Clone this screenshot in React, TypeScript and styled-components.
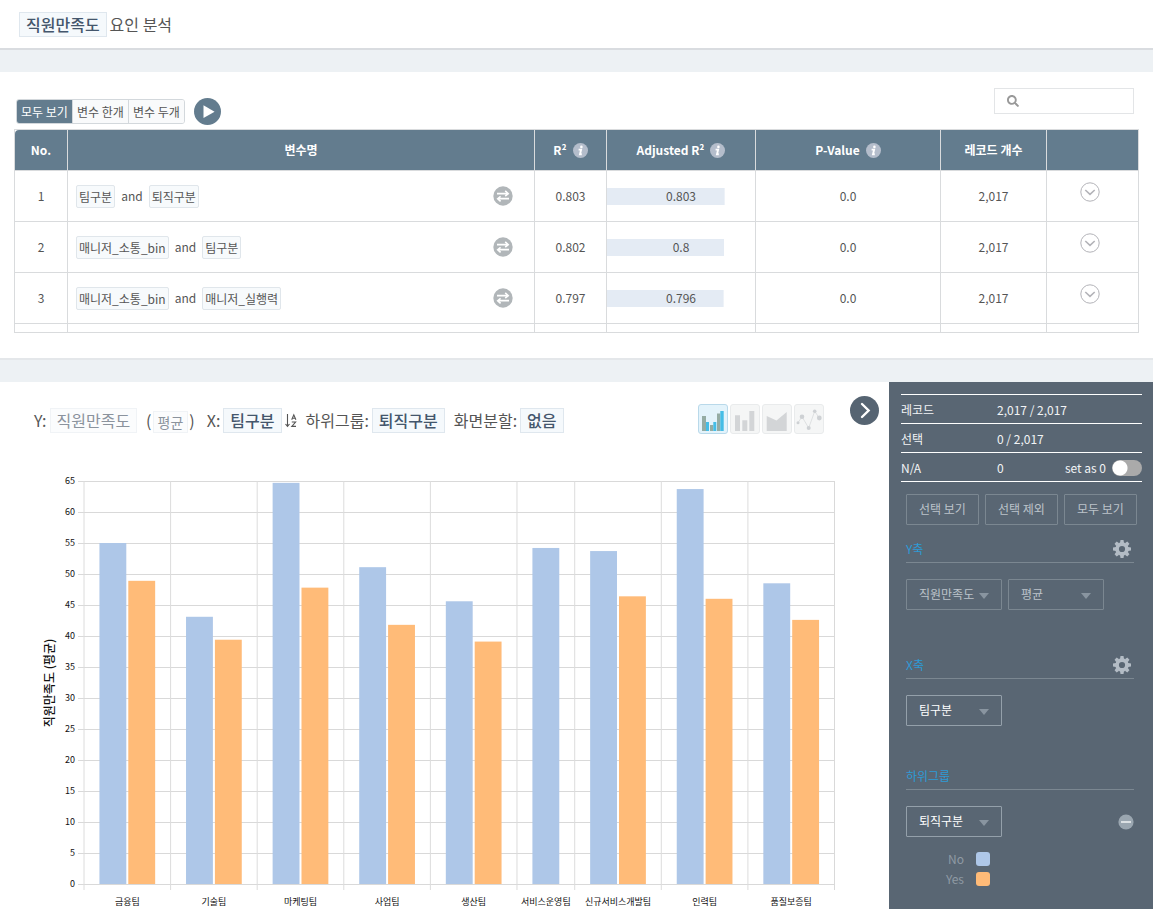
import React from 'react';
import styled, { createGlobalStyle } from 'styled-components';
import { FaSearch } from 'react-icons/fa';

const GlobalStyle = createGlobalStyle`
  * { box-sizing: border-box; }
  body {
    margin: 0;
    background: #fff;
    color: #555;
    font-family: 'Noto Sans CJK KR', 'Noto Sans', sans-serif;
    font-size: 12px;
    line-height: 18px;
  }
  button, input, select { font: inherit; color: inherit; }
  svg { display: block; }
`;

const Page = styled.div`
  display: flex;
  flex-direction: column;
  min-height: 100vh;
`;

const TopBar = styled.header`
  display: flex;
  align-items: center;
  height: 48px;
  padding: 0 19px;
`;

const Band = styled.div<{ $strong?: boolean }>`
  height: 24px;
  background: #edf1f4;
  border-top: 2px solid ${(p) => (p.$strong ? '#d9dce0' : '#e4e7ea')};
`;

const Title = styled.h1`
  display: flex;
  align-items: center;
  gap: 3px;
  margin: 0;
  font-size: 16px;
  line-height: 24px;
  font-weight: 400;
`;

const BigChip = styled.span<{ $muted?: boolean }>`
  padding: 0 6px;
  border: 1px solid ${(p) => (p.$muted ? '#f0f3f6' : '#dfe7ee')};
  background: ${(p) => (p.$muted ? '#fbfcfd' : '#f5f9fc')};
  color: ${(p) => (p.$muted ? '#8b939d' : '#44566c')};
  font-size: 16px;
  line-height: 23px;
  font-weight: ${(p) => (p.$muted ? 400 : 500)};
`;

const SmallChip = styled(BigChip)`
  margin-top: 2px;
  padding: 0 4px;
  font-size: 14px;
  line-height: 20px;
`;

const FactorPanel = styled.section`
  height: 286px;
  padding: 16px 14px 0;
`;

const Toolbar = styled.div`
  display: flex;
  align-items: flex-start;
  justify-content: space-between;
  height: 41px;
  padding: 0 5px 0 2px;
`;

const ViewControls = styled.div`
  display: flex;
  align-items: center;
  gap: 9px;
  padding-top: 10px;
`;

const Segments = styled.div`
  display: flex;
  border: 1px solid #d3d8dc;
  border-radius: 3px;
  overflow: hidden;
`;

const Segment = styled.button<{ $active?: boolean }>`
  width: 56px;
  height: 23px;
  padding: 0;
  border: 0;
  border-left: 1px solid #d3d8dc;
  background: ${(p) => (p.$active ? '#637c8e' : '#f9fafb')};
  color: ${(p) => (p.$active ? '#fff' : '#555')};
  white-space: nowrap;
  &:first-child { border-left: 0; width: 55px; }
`;

const IconButton = styled.button`
  display: inline-flex;
  padding: 0;
  border: 0;
  background: none;
`;

const SearchBox = styled.label`
  display: flex;
  align-items: center;
  width: 140px;
  height: 26px;
  padding-left: 12px;
  gap: 8px;
  border: 1px solid #e3e5e7;
  color: #999;
`;

const SearchInput = styled.input`
  flex: 1;
  min-width: 0;
  border: 0;
  padding: 0;
  outline: 0;
  background: none;
`;

const TableFrame = styled.div`
  height: 204px;
  overflow: hidden;
  border: 1px solid #d9dbdd;
  border-right: 0;
`;

const Table = styled.table`
  width: 100%;
  table-layout: fixed;
  border-collapse: separate;
  border-spacing: 0;
`;

const Col = styled.col<{ $w?: number }>`
  width: ${(p) => (p.$w ? `${p.$w}px` : 'auto')};
`;

const HeadCell = styled.th`
  height: 41px;
  padding: 0;
  background: #637c8e;
  color: #fff;
  font-weight: 700;
  border-right: 1px solid #d9dbdd;
  border-bottom: 1px solid #d9dbdd;
  &:first-child { border-top-left-radius: 4px; }
`;

const HeadLabel = styled.div`
  display: flex;
  align-items: center;
  justify-content: center;
  gap: 6px;
`;

const Cell = styled.td`
  height: 51px;
  padding: 0;
  text-align: center;
  border-right: 1px solid #d9dbdd;
  border-bottom: 1px solid #d9dbdd;
`;

const Variables = styled.div`
  display: flex;
  align-items: center;
  gap: 6px;
  padding: 0 21px 0 8px;
`;

const Chip = styled.span`
  padding: 0 2px;
  border: 1px solid #e0e6eb;
  border-radius: 2px;
  background: #f7fafc;
  line-height: 21px;
`;

const SwapButton = styled(IconButton)`
  margin-left: auto;
`;

const ScoreBar = styled.div<{ $score: number }>`
  padding-bottom: 2px;
  line-height: 15px;
  background: linear-gradient(#e4ebf4, #e4ebf4) no-repeat;
  background-size: ${(p) => p.$score * 99}% 100%;
`;

const Expand = styled.div`
  display: flex;
  justify-content: center;
  padding: 0 5px 8px 0;
`;

const Workspace = styled.div`
  display: flex;
  flex: 1;
`;

const ChartArea = styled.main`
  flex: 1;
  min-width: 0;
`;

const ChartHeader = styled.div`
  display: flex;
  align-items: flex-start;
  height: 78px;
  padding: 14px 10px 0 34px;
`;

const Encodings = styled.div`
  display: flex;
  align-items: center;
  padding-top: 12px;
  font-size: 16px;
  line-height: 25px;
  white-space: nowrap;
`;

const Encoding = styled.div`
  display: flex;
  align-items: center;
  gap: 3px;
  margin-right: 9px;
`;

const Aggregate = styled(Encoding)`
  gap: 1px;
  margin-right: 12px;
`;

const ChartTypes = styled.div`
  display: flex;
  gap: 2px;
  margin: 8px 26px 0 auto;
`;

const ChartType = styled.button<{ $active?: boolean }>`
  display: flex;
  align-items: center;
  justify-content: center;
  width: 30px;
  height: 30px;
  padding: 0;
  border: 1px solid ${(p) => (p.$active ? '#b9d9ea' : '#e9ebec')};
  border-radius: 3px;
  background: ${(p) => (p.$active ? '#e3f3fb' : '#f5f6f6')};
`;

const ChartSvg = styled.svg`
  width: 100%;
  height: auto;
  font-size: 9px;
  fill: #111;
`;

const AxisTitle = styled.text`
  font-size: 12px;
  font-weight: 500;
`;

const Sidebar = styled.aside`
  width: 264px;
  padding: 12px 11px 20px 12px;
  background: #596673;
  color: #f2f4f6;
`;

const Stats = styled.table`
  width: 100%;
  border-collapse: collapse;
  border-top: 1px solid #fff;
`;

const StatRow = styled.tr`
  border-bottom: 1px solid #fff;
`;

const StatLabel = styled.th`
  width: 96px;
  height: 29px;
  padding: 2px 0 0;
  text-align: left;
  font-weight: 400;
`;

const StatValue = styled.td`
  height: 29px;
  padding: 2px 0 0;
`;

const StatValueLine = styled.div`
  display: flex;
  align-items: center;
  justify-content: space-between;
`;

const SwitchLabel = styled.label`
  display: flex;
  align-items: center;
  gap: 6px;
`;

const Switch = styled.input`
  appearance: none;
  width: 30px;
  height: 16px;
  margin: 0;
  border-radius: 8px;
  background: radial-gradient(circle at 8px 8px, #fff 7px, transparent 8px) #aaa;
`;

const FilterButtons = styled.div`
  display: flex;
  gap: 6px;
  padding: 12px 5px 11px;
`;

const FilterButton = styled.button`
  flex: 1;
  height: 31px;
  padding: 0 0 2px;
  border: 1px solid #7b8791;
  border-radius: 1px;
  background: none;
  color: #bcc3ca;
  white-space: nowrap;
`;

const Group = styled.section<{ $h: number }>`
  height: ${(p) => p.$h}px;
  padding: 0 8px 0 5px;
`;

const GroupTitle = styled.h2`
  display: flex;
  align-items: center;
  justify-content: space-between;
  height: 27px;
  margin: 0 0 16px;
  padding-right: 3px;
  border-bottom: 1px solid #7b8791;
  color: #2d9bd6;
  font-size: 12px;
  font-weight: 400;
`;

const Fields = styled.div`
  display: flex;
  align-items: center;
  gap: 6px;
`;

const SelectWrap = styled.div<{ $muted?: boolean }>`
  position: relative;
  width: 96px;
  color: ${(p) => (p.$muted ? '#bcc3ca' : '#fff')};
`;

const Select = styled.select<{ $muted?: boolean }>`
  appearance: none;
  width: 100%;
  height: 31px;
  padding: 0 12px 1px;
  border: 1px solid ${(p) => (p.$muted ? '#7b8791' : '#94a0aa')};
  border-radius: 1px;
  background: none;
`;

const Caret = styled.svg`
  position: absolute;
  right: 13px;
  top: 14px;
  pointer-events: none;
`;

const RemoveButton = styled(IconButton)`
  margin-left: auto;
`;

const Legend = styled.ul`
  display: grid;
  gap: 2px;
  margin: 13px 0 0;
  padding: 0;
  list-style: none;
  color: #8f9aa4;
`;

const LegendItem = styled.li`
  display: flex;
  align-items: center;
  gap: 12px;
  width: 84px;
  justify-content: flex-end;
`;

const Swatch = styled.span<{ $color: string }>`
  width: 14px;
  height: 14px;
  border-radius: 3px;
  background: ${(p) => p.$color};
`;

const BLUE = '#aec7e8';
const ORANGE = '#ffbb78';

const rows = [
  { no: 1, vars: ['팀구분', '퇴직구분'], r2: '0.803', adj: '0.803', p: '0.0', n: '2,017' },
  { no: 2, vars: ['매니저_소통_bin', '팀구분'], r2: '0.802', adj: '0.8', p: '0.0', n: '2,017' },
  { no: 3, vars: ['매니저_소통_bin', '매니저_실행력'], r2: '0.797', adj: '0.796', p: '0.0', n: '2,017' },
];

const teams: { name: string; no: number; yes?: number }[] = [
  { name: '금융팀', no: 55, yes: 48.9 },
  { name: '기술팀', no: 43.1, yes: 39.4 },
  { name: '마케팅팀', no: 64.7, yes: 47.8 },
  { name: '사업팀', no: 51.1, yes: 41.8 },
  { name: '생산팀', no: 45.6, yes: 39.1 },
  { name: '서비스운영팀', no: 54.2 },
  { name: '신규서비스개발팀', no: 53.7, yes: 46.4 },
  { name: '인력팀', no: 63.7, yes: 46 },
  { name: '품질보증팀', no: 48.5, yes: 42.6 },
];

const InfoIcon = () => (
  <svg width="15" height="15" viewBox="0 0 15 15" aria-hidden="true">
    <circle cx="7.5" cy="7.5" r="7.5" fill="#b4bdcb" />
    <circle cx="8.4" cy="3.9" r="1.3" fill="#fff" />
    <path d="M5.6 6.6h2.5l-1.1 4.6h1.8" fill="none" stroke="#fff" strokeWidth="1.9" />
  </svg>
);

const PlayIcon = () => (
  <svg width="27" height="27" viewBox="0 0 27 27" aria-hidden="true">
    <circle cx="13.5" cy="13.5" r="13.5" fill="#637c8e" />
    <path d="M9.5 7.3L20.6 13.7L9.5 20Z" fill="#fff" />
  </svg>
);

const SwapIcon = () => (
  <svg width="20" height="20" viewBox="0 0 20 20" aria-hidden="true">
    <circle cx="10" cy="10" r="9.7" fill="#b1b6b9" />
    <path d="M4 7.7H14M16 12.6H6" stroke="#fff" strokeWidth="1.8" />
    <path d="M12.2 4.8L15.2 7.7L12.2 10M7.6 10.3L4.7 12.7L7.6 15.4" fill="none" stroke="#fff" strokeWidth="1.6" />
  </svg>
);

const ExpandIcon = () => (
  <svg width="20" height="20" viewBox="0 0 20 20" fill="none" stroke="#b3b3b8" aria-hidden="true">
    <circle cx="10" cy="10" r="9.2" />
    <path d="M5.3 8L10 12.4L14.7 8" strokeWidth="1.6" />
  </svg>
);

const SortIcon = () => (
  <svg width="12" height="15" viewBox="0 0 12 15" fill="none" stroke="#555" strokeWidth="1.1" aria-hidden="true">
    <path d="M2.5 1V13M0.5 11L2.5 13.4L4.5 11" />
    <path d="M6.7 6.8L8.8 1.8L10.9 6.8M7.4 5.2H10.2" />
    <path d="M6.8 9H10.6L6.8 13.4H11" />
  </svg>
);

const NextIcon = () => (
  <svg width="29" height="29" viewBox="0 0 29 29" fill="none" aria-hidden="true">
    <circle cx="14.5" cy="14.5" r="14.5" fill="#566472" />
    <path d="M12 8L18.6 14.5L12 21" stroke="#fff" strokeWidth="2.4" strokeLinecap="round" />
  </svg>
);

const GroupedBarsIcon = () => (
  <svg width="24" height="24" viewBox="0 0 24 24" aria-hidden="true">
    <path d="M1 9h4v15H1zM9 18h3.300v6H9zM16 6.500h3.300V24H16z" fill="#95aca4" />
    <path d="M5 15h3v9H5zM12.300 15h3v9h-3zM19.300 4h3.400v20h-3.400z" fill="#45bde6" />
  </svg>
);

const BarsIcon = () => (
  <svg width="24" height="24" viewBox="0 0 24 24" fill="#d3d5d7" aria-hidden="true">
    <path d="M2 8.300h5V24H2zM9.300 13.300h5V24h-5zM16.300 4h5v20h-5z" />
  </svg>
);

const AreaIcon = () => (
  <svg width="24" height="24" viewBox="0 0 24 24" fill="#d3d5d7" aria-hidden="true">
    <path d="M1.700 9L11.500 13.500L21.700 5V24H1.700Z" />
  </svg>
);

const LineIcon = () => (
  <svg width="28" height="28" viewBox="0 0 28 28" fill="#ced1d4" aria-hidden="true">
    <path d="M3 17.700L7 11.700L13.700 23L19.700 6.300L24.300 13" fill="none" stroke="#d8dadc" strokeWidth="0.8" />
    <circle cx="3" cy="17.700" r="1.500" />
    <circle cx="7" cy="11.700" r="2.300" />
    <circle cx="13.700" cy="23" r="2" />
    <circle cx="19.700" cy="6.300" r="1.800" />
    <circle cx="24.300" cy="13" r="2.400" />
  </svg>
);

const GearIcon = () => (
  <svg width="18" height="18" viewBox="0 0 18 18" aria-hidden="true">
    <circle cx="9" cy="9" r="4.900" fill="none" stroke="#b3bcc5" strokeWidth="3.600" />
    {[0, 45, 90, 135, 180, 225, 270, 315].map((a) => (
      <path key={a} d="M7 3L7.500 0H10.500L11 3Z" fill="#b3bcc5" transform={`rotate(${a} 9 9)`} />
    ))}
  </svg>
);

const RemoveIcon = () => (
  <svg width="16" height="16" viewBox="0 0 16 16" aria-hidden="true">
    <circle cx="8" cy="8" r="7.6" fill="#9aa6b0" />
    <path d="M3 8h10" stroke="#fff" strokeWidth="1.3" />
  </svg>
);

function BarChart() {
  const left = 84;
  const right = 834.5;
  const base = 424;
  const unit = 6.2;
  const slot = (right - left) / 26;
  const ticks = Array.from({ length: 14 }, (_, i) => i * 5);
  let x = left;
  const bands = teams.map((t) => {
    const width = (t.yes === undefined ? 2 : 3) * slot;
    const band = { ...t, x, width };
    x += width;
    return band;
  });
  return (
    <ChartSvg viewBox="0 0 889 448" role="img" aria-label="팀구분별 직원만족도 평균">
      {ticks.map((v) => (
        <g key={v}>
          <path d={`M${left - 6} ${base - v * unit + 0.5}H${right}`} stroke="#d9d9d9" />
          <text x="75" y={base - v * unit + 3} textAnchor="end">{v}</text>
        </g>
      ))}
      {bands.map((b) => (
        <g key={b.name}>
          <path d={`M${b.x} ${base - 65 * unit}V${base + 6}`} stroke="#dcdcdc" />
          <rect x={b.x + slot / 2 + 1} y={base - b.no * unit} width={slot - 2} height={b.no * unit} fill={BLUE} />
          {b.yes !== undefined && (
            <rect x={b.x + slot * 1.5 + 1} y={base - b.yes * unit} width={slot - 2} height={b.yes * unit} fill={ORANGE} />
          )}
          <text x={b.x + b.width / 2} y={base + 21} textAnchor="middle">{b.name}</text>
        </g>
      ))}
      <path d={`M${right} ${base - 65 * unit}V${base + 6}`} stroke="#d9d9d9" />
      <AxisTitle transform="translate(54 223) rotate(-90)" textAnchor="middle">직원만족도 (평균)</AxisTitle>
    </ChartSvg>
  );
}

function Dropdown({ label, value, muted }: { label: string; value: string; muted?: boolean }) {
  return (
    <SelectWrap $muted={muted}>
      <Select $muted={muted} aria-label={label} defaultValue={value}>
        <option>{value}</option>
      </Select>
      <Caret width="10" height="6" viewBox="0 0 10 6" fill="#8995a0" aria-hidden="true">
        <path d="M0 0H10L5 6Z" />
      </Caret>
    </SelectWrap>
  );
}

export default function App() {
  return (
    <Page>
      <GlobalStyle />
      <TopBar>
        <Title><BigChip>직원만족도</BigChip> 요인 분석</Title>
      </TopBar>
      <Band $strong />
      <FactorPanel>
        <Toolbar>
          <ViewControls>
            <Segments>
              <Segment $active>모두 보기</Segment>
              <Segment>변수 한개</Segment>
              <Segment>변수 두개</Segment>
            </Segments>
            <IconButton aria-label="실행"><PlayIcon /></IconButton>
          </ViewControls>
          <SearchBox>
            <FaSearch size={12} />
            <SearchInput type="search" aria-label="검색" />
          </SearchBox>
        </Toolbar>
        <TableFrame>
          <Table>
            <colgroup>
              <Col $w={53} /><Col /><Col $w={72} /><Col $w={149} /><Col $w={185} /><Col $w={106} /><Col $w={92} />
            </colgroup>
            <thead>
              <tr>
                <HeadCell>No.</HeadCell>
                <HeadCell>변수명</HeadCell>
                <HeadCell><HeadLabel>R²<InfoIcon /></HeadLabel></HeadCell>
                <HeadCell><HeadLabel>Adjusted R²<InfoIcon /></HeadLabel></HeadCell>
                <HeadCell><HeadLabel>P-Value<InfoIcon /></HeadLabel></HeadCell>
                <HeadCell>레코드 개수</HeadCell>
                <HeadCell />
              </tr>
            </thead>
            <tbody>
              {rows.map((r) => (
                <tr key={r.no}>
                  <Cell>{r.no}</Cell>
                  <Cell>
                    <Variables>
                      <Chip>{r.vars[0]}</Chip>
                      and
                      <Chip>{r.vars[1]}</Chip>
                      <SwapButton aria-label="변수 교체"><SwapIcon /></SwapButton>
                    </Variables>
                  </Cell>
                  <Cell>{r.r2}</Cell>
                  <Cell><ScoreBar $score={Number(r.adj)}>{r.adj}</ScoreBar></Cell>
                  <Cell>{r.p}</Cell>
                  <Cell>{r.n}</Cell>
                  <Cell><Expand><IconButton aria-label="펼치기"><ExpandIcon /></IconButton></Expand></Cell>
                </tr>
              ))}
              <tr>
                <Cell /><Cell /><Cell /><Cell /><Cell /><Cell /><Cell />
              </tr>
            </tbody>
          </Table>
        </TableFrame>
      </FactorPanel>
      <Band />
      <Workspace>
        <ChartArea>
          <ChartHeader>
            <Encodings>
              <Encoding>Y: <BigChip $muted>직원만족도</BigChip></Encoding>
              <Aggregate>( <SmallChip $muted>평균</SmallChip> )</Aggregate>
              <Encoding>X: <BigChip>팀구분</BigChip><SortIcon /></Encoding>
              <Encoding>하위그룹: <BigChip>퇴직구분</BigChip></Encoding>
              <Encoding>화면분할: <BigChip>없음</BigChip></Encoding>
            </Encodings>
            <ChartTypes>
              <ChartType $active aria-label="그룹 막대"><GroupedBarsIcon /></ChartType>
              <ChartType aria-label="막대"><BarsIcon /></ChartType>
              <ChartType aria-label="영역"><AreaIcon /></ChartType>
              <ChartType aria-label="선"><LineIcon /></ChartType>
            </ChartTypes>
            <IconButton aria-label="패널 접기"><NextIcon /></IconButton>
          </ChartHeader>
          <BarChart />
        </ChartArea>
        <Sidebar>
          <Stats>
            <tbody>
              <StatRow><StatLabel>레코드</StatLabel><StatValue>2,017 / 2,017</StatValue></StatRow>
              <StatRow><StatLabel>선택</StatLabel><StatValue>0 / 2,017</StatValue></StatRow>
              <StatRow>
                <StatLabel>N/A</StatLabel>
                <StatValue>
                  <StatValueLine>
                    0
                    <SwitchLabel>set as 0 <Switch type="checkbox" role="switch" /></SwitchLabel>
                  </StatValueLine>
                </StatValue>
              </StatRow>
            </tbody>
          </Stats>
          <FilterButtons>
            <FilterButton>선택 보기</FilterButton>
            <FilterButton>선택 제외</FilterButton>
            <FilterButton>모두 보기</FilterButton>
          </FilterButtons>
          <Group $h={116}>
            <GroupTitle>Y축 <IconButton aria-label="Y축 설정"><GearIcon /></IconButton></GroupTitle>
            <Fields>
              <Dropdown label="Y축 변수" value="직원만족도" muted />
              <Dropdown label="Y축 집계" value="평균" muted />
            </Fields>
          </Group>
          <Group $h={111}>
            <GroupTitle>X축 <IconButton aria-label="X축 설정"><GearIcon /></IconButton></GroupTitle>
            <Fields><Dropdown label="X축 변수" value="팀구분" /></Fields>
          </Group>
          <Group $h={127}>
            <GroupTitle>하위그룹</GroupTitle>
            <Fields>
              <Dropdown label="하위그룹 변수" value="퇴직구분" />
              <RemoveButton aria-label="하위그룹 제거"><RemoveIcon /></RemoveButton>
            </Fields>
            <Legend>
              <LegendItem>No <Swatch $color={BLUE} /></LegendItem>
              <LegendItem>Yes <Swatch $color={ORANGE} /></LegendItem>
            </Legend>
          </Group>
        </Sidebar>
      </Workspace>
    </Page>
  );
}
